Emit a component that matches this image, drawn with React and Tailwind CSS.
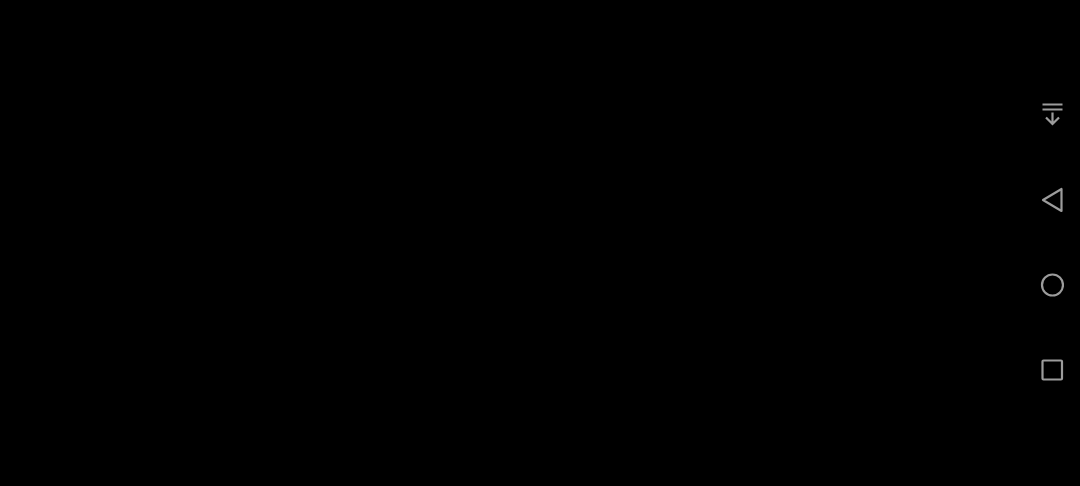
export default function App() {
  const stroke = "#9c9c9c";
  return (
    <div className="flex h-[486px] w-[1080px] justify-end overflow-hidden bg-black">
      <div className="flex w-[56px] flex-col items-center justify-center pb-[2px]">
        <button className="flex h-[85px] w-full items-center justify-center">
          <svg width="24" height="24" viewBox="0 0 24 24" fill="none" stroke={stroke} strokeWidth="2.200">
            <path d="M2.500 1.500h20M2.500 6.500h20" />
            <path d="M12.500 9.500v11.500M6 14.500 12.500 21l6.500-6.500" />
          </svg>
        </button>
        <button className="flex h-[85px] w-full items-center justify-center">
          <svg width="24" height="28" viewBox="0 0 24 28" fill="none" stroke={stroke} strokeWidth="2.200" strokeLinejoin="round">
            <path d="M21.500 3V25L3 14Z" />
          </svg>
        </button>
        <button className="flex h-[85px] w-full items-center justify-center">
          <svg width="24" height="24" viewBox="0 0 24 24" fill="none" stroke={stroke} strokeWidth="2.200">
            <circle cx="12.500" cy="12" r="10.500" />
          </svg>
        </button>
        <button className="flex h-[85px] w-full items-center justify-center">
          <svg width="24" height="24" viewBox="0 0 24 24" fill="none" stroke={stroke} strokeWidth="2.200" strokeLinejoin="round">
            <rect x="2.500" y="2.500" width="19.500" height="19" rx="1" />
          </svg>
        </button>
      </div>
    </div>
  );
}
